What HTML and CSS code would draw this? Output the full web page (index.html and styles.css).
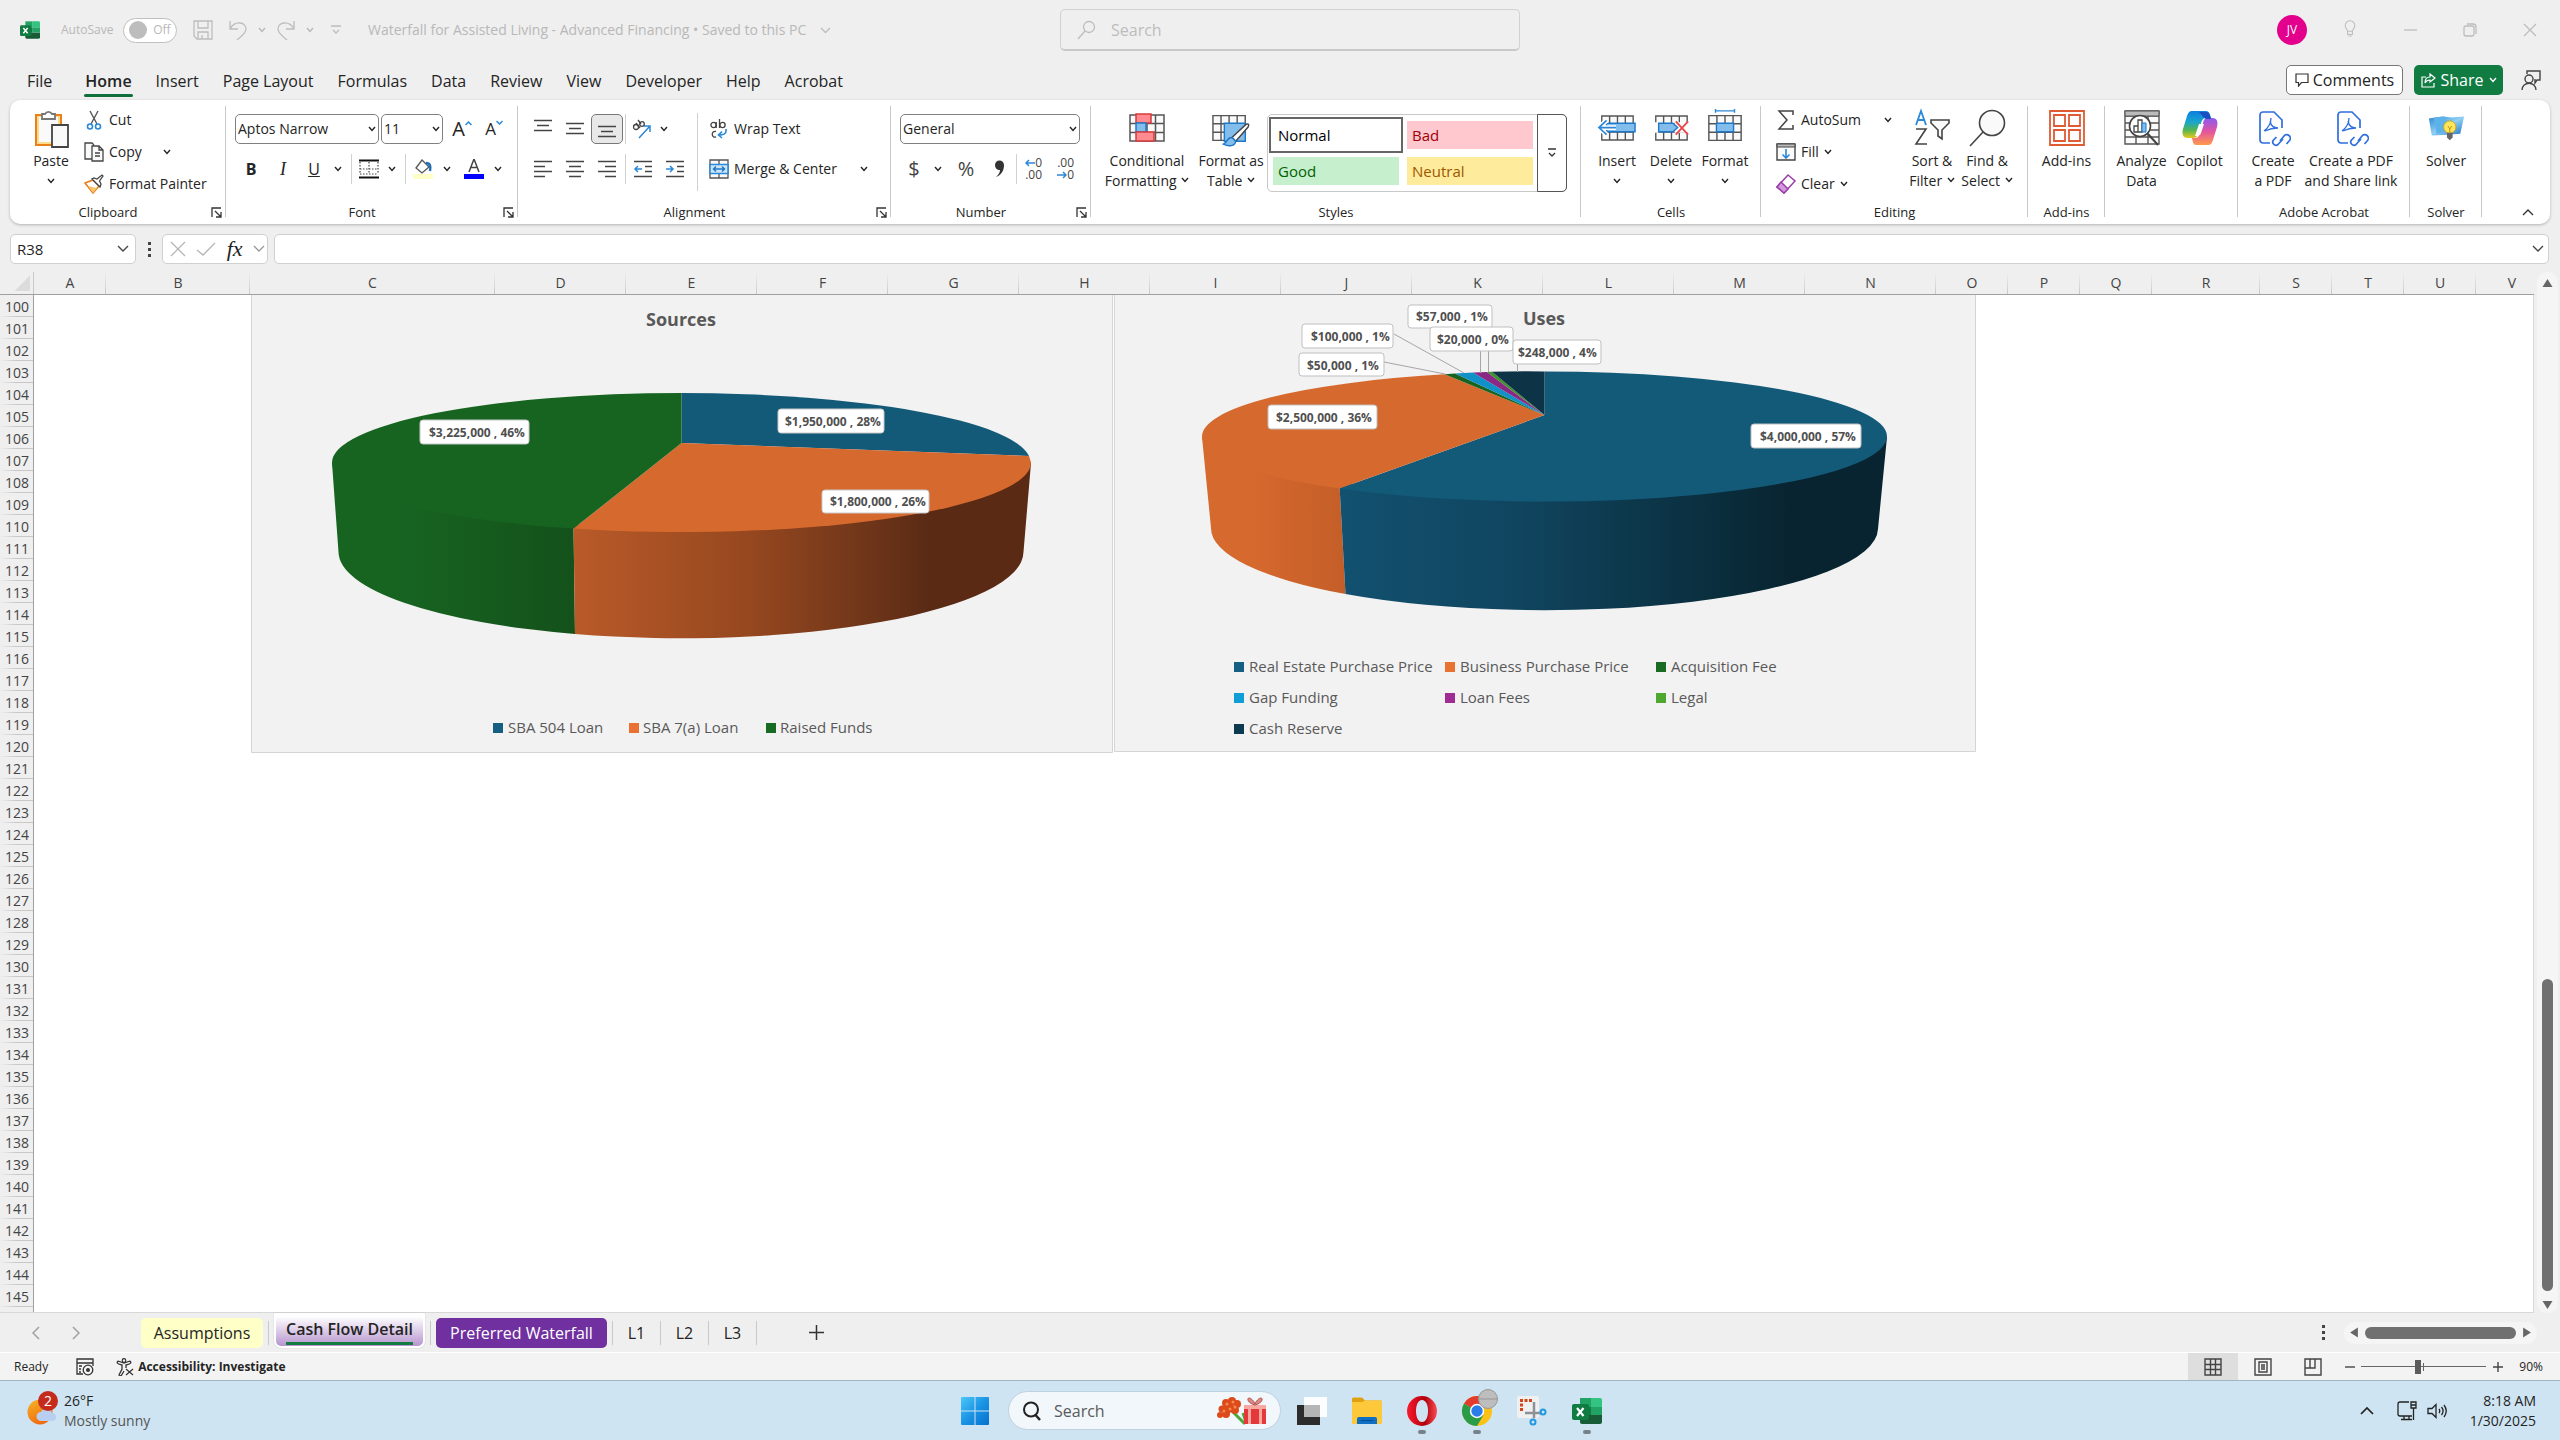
FILE: index.html
```html
<!DOCTYPE html>
<html lang="en">
<head>
<meta charset="utf-8">
<title>Waterfall for Assisted Living - Advanced Financing</title>
<link rel="stylesheet" href="styles.css">
</head>
<body>
<svg class="defs" aria-hidden="true">
  <symbol id="chev" viewBox="0 0 8 6"><path d="M1 1l3 3.5L7 1" fill="none" stroke="currentColor" stroke-width="1.4"/></symbol>
  <symbol id="launch" viewBox="0 0 11 11"><path d="M1 10V1h9M4 4l6 6M10 5v5H5" fill="none" stroke="#333" stroke-width="1.3"/></symbol>
  <symbol id="excel" viewBox="0 0 30 30"><path d="M8 2h11v9H8z" fill="#21a366"/><path d="M19 2h9a2 2 0 0 1 2 2v7H19z" fill="#33c481"/><path d="M8 11h11v8H8z" fill="#107c41"/><path d="M19 11h11v8H19z" fill="#21a366"/><path d="M8 19h22v7a2 2 0 0 1-2 2H10a2 2 0 0 1-2-2z" fill="#185c37"/><rect y="8" width="17" height="16" rx="2" fill="#107c41"/><path d="M5 12l6.500 8M11.500 12L5 20" stroke="#fff" stroke-width="2.200"/></symbol>
  <symbol id="grid" viewBox="0 0 36 28"><path d="M1 1h34v26H1zM1 9.500h34M1 18.500h34M9.500 1v26M18 1v26M26.500 1v26" fill="#fafafa" stroke="#555" stroke-width="1.500"/></symbol>
  <symbol id="pdf" viewBox="0 0 36 40"><path d="M15 35H8a3 3 0 0 1-3-3V7a3 3 0 0 1 3-3h11l8 8v8" fill="none" stroke="#2f6fde" stroke-width="1.700"/><path d="M9 23c4-3 7-7 7-13M15 13c1 5 4 7 8 7-5 0-9 1-13 3" fill="none" stroke="#2f6fde" stroke-width="1.300"/><path d="M25 32l4-5a3.500 3.500 0 0 1 5.500 4.500l-3 3.500M28 30l-5 5.500a3.200 3.200 0 0 1-4.500-4.500l3-3" transform="translate(0 1)" fill="none" stroke="#2f6fde" stroke-width="1.700"/></symbol>
</svg>

<header class="titlebar">
  <div class="quick">
    <svg class="i20 app" ><use href="#excel"/></svg>
    <span class="autosave">AutoSave</span>
    <button class="toggle" aria-label="AutoSave"><i></i>Off</button>
    <button class="qa save" aria-label="Save"><svg class="i20" viewBox="0 0 20 20"><path d="M1 1h18v18H4l-3-3zM5 1v7h10V1M5 19v-7h10v7M9 15v4" /></svg></button>
    <button class="qa" aria-label="Undo"><svg class="i20" viewBox="0 0 20 20"><path d="M2 1v8h8M2 9C7 0 18 2 18 9c0 3-2 5-9 11"/></svg></button>
    <button class="qa dd" aria-label="Undo list"><svg class="chev"><use href="#chev"/></svg></button>
    <button class="qa" aria-label="Redo"><svg class="i20" viewBox="0 0 20 20"><path d="M18 1v8h-8M18 9C13 0 2 2 2 9c0 3 2 5 9 11"/></svg></button>
    <button class="qa dd" aria-label="Redo list"><svg class="chev"><use href="#chev"/></svg></button>
    <button class="qa more" aria-label="Customize toolbar"><svg width="10" height="10" viewBox="0 0 10 10"><path d="M0 1h10M2 5l3 3 3-3"/></svg></button>
    <button class="doc">Waterfall for Assisted Living - Advanced Financing • Saved to this PC <svg width="11" height="7" viewBox="0 0 11 7"><path d="M1 1l4.500 4.500L10 1"/></svg></button>
  </div>
  <label class="search"><svg width="20" height="20" viewBox="0 0 20 20"><circle cx="12" cy="7" r="5.500"/><path d="M8 11l-7 8"/></svg><input type="text" placeholder="Search" aria-label="Search"></label>
  <div class="window">
    <button class="avatar">JV</button>
    <button aria-label="Ideas"><svg class="i20" viewBox="0 0 20 20"><path d="M7 14C6 11 4 10 4 7a6 6 0 0 1 12 0c0 3-2 4-3 7zM7 14v4h6v-4M8 20h4" transform="translate(2 0) scale(.8)"/></svg></button>
    <button aria-label="Minimize"><svg class="i20" viewBox="0 0 20 20"><path d="M4 10h13"/></svg></button>
    <button aria-label="Restore"><svg class="i20" viewBox="0 0 20 20"><rect x="4" y="6" width="10" height="10" rx="2"/><path d="M7 4h6a3 3 0 0 1 3 3v7"/></svg></button>
    <button aria-label="Close"><svg class="i20" viewBox="0 0 20 20"><path d="M4 4l12 12M16 4L4 16"/></svg></button>
  </div>
</header>

<nav class="tabs">
  <button class="file">File</button><button class="on">Home</button><button>Insert</button><button>Page Layout</button><button>Formulas</button><button>Data</button><button>Review</button><button>View</button><button>Developer</button><button>Help</button><button>Acrobat</button>
  <div class="actions">
    <button class="comments"><svg width="14" height="14" viewBox="0 0 14 14"><path d="M1 1h12v8.500H6.500L3.500 13V9.500H1z" fill="none" stroke="#333" stroke-width="1.200"/></svg>Comments</button>
    <button class="share"><svg width="15" height="15" viewBox="0 0 15 15"><path d="M5 4H1v10h12v-4M9 1l5 4-5 4V7C7 7 5 8 4 10c0-4 2-6 5-6z" fill="none" stroke="#fff" stroke-width="1.200"/></svg>Share<svg class="chev"><use href="#chev"/></svg></button>
    <button class="catchup" aria-label="Catch up"><svg class="i20" viewBox="0 0 20 20"><circle cx="8" cy="9" r="4"/><path d="M1 20c0-9 14-9 14 0M6 4V1h13v9h-3l-2 3v-4"/></svg></button>
  </div>
</nav>

<section class="ribbon">
  <div class="group g-clip">
    <div class="body">
      <button class="big paste"><svg viewBox="0 0 36 40"><path d="M3 7h25v30H3z" fill="#fbdc8e" stroke="#e8811a" stroke-width="2"/><path d="M6 9h19v25H6z" fill="#fafafa"/><path d="M9 6h3a4 4 0 0 1 7 0h3v5H9z" fill="#fff" stroke="#777" stroke-width="1.800"/><path d="M19 17h16v22H19z" fill="#fafafa" stroke="#444" stroke-width="1.800"/></svg><span>Paste</span><svg class="chev"><use href="#chev"/></svg></button>
      <div class="stack">
        <button><svg class="i20" viewBox="0 0 20 20"><path d="M6 1l7 13M14 1L7 14" stroke="#555" fill="none" stroke-width="1.400"/><circle cx="6" cy="16.500" r="2.500" fill="none" stroke="#2b88d8" stroke-width="1.600"/><circle cx="14" cy="16.500" r="2.500" fill="none" stroke="#2b88d8" stroke-width="1.600"/></svg>Cut</button>
        <button class="copy"><svg class="i20" viewBox="0 0 20 20"><path d="M8 17H1V1h7l2 2M8 4h7l4 4v11H8zM15 4v4h4M11 11h5M11 14h5" fill="#fafafa" stroke="#444" stroke-width="1.300"/></svg>Copy<svg class="chev"><use href="#chev"/></svg></button>
        <button><svg class="i20" viewBox="0 0 20 20"><path d="M9 6l6 6-6 7L1 9z" fill="#fff" stroke="#e8811a" stroke-width="1.600"/><path d="M4 12l9 2-4 5z" fill="#f9c36b"/><path d="M8 5l8 8 1-3-1.500-3L19 2l-1-1-5 4-3-1z" fill="#fff" stroke="#444" stroke-width="1.300"/></svg>Format Painter</button>
      </div>
    </div>
    <div class="name">Clipboard<button aria-label="Clipboard options"><svg><use href="#launch"/></svg></button></div>
  </div>

  <div class="group g-font">
    <div class="body rows">
      <div class="row">
        <label class="combo w144"><select aria-label="Font"><option>Aptos Narrow</option></select><svg class="chev"><use href="#chev"/></svg></label>
        <label class="combo w62"><select aria-label="Font size"><option>11</option></select><svg class="chev"><use href="#chev"/></svg></label>
        <button class="w32 grow">A<svg width="7" height="5" viewBox="0 0 7 5"><path d="M.5 4l3-3 3 3" fill="none" stroke="#2b88d8" stroke-width="1.500"/></svg></button>
        <button class="w32 shrink">A<svg width="7" height="5" viewBox="0 0 7 5"><path d="M.5 1l3 3 3-3" fill="none" stroke="#2b88d8" stroke-width="1.500"/></svg></button>
      </div>
      <div class="row">
        <button class="w32 b">B</button><button class="w32 i">I</button><button class="w30 u">U</button><button class="w18" aria-label="Underline style"><svg class="chev"><use href="#chev"/></svg></button><hr>
        <button class="w28" aria-label="Borders"><svg class="i20" viewBox="0 0 20 20"><path d="M0 1.500h20M0 18.500h20" stroke="#111" stroke-width="2"/><path d="M1 3v12M19 3v12M10 3v12M1 10h18M1 15h18" stroke="#444" stroke-width="1.200" stroke-dasharray="1.500 1.500"/></svg></button><button class="w18" aria-label="Border list"><svg class="chev"><use href="#chev"/></svg></button><hr>
        <button class="w28" aria-label="Fill color"><svg class="i20" viewBox="0 0 20 20"><path d="M9 1l7 7-7 6-6-5z" fill="#fff" stroke="#555" stroke-width="1.300"/><path d="M13 4c4 0 5 3 4 8" stroke="#1f6fb5" stroke-width="2.500" fill="none"/><path d="M0 15h20v5H0z" fill="#ffffc8"/></svg></button><button class="w20" aria-label="Fill list"><svg class="chev"><use href="#chev"/></svg></button>
        <button class="w34" aria-label="Font color"><svg class="i20" viewBox="0 0 20 20"><path d="M5 13L10 0l5 13M7 8.500h6" fill="none" stroke="#444" stroke-width="1.500"/><path d="M0 15h20v5H0z" fill="#00f"/></svg></button><button class="w14" aria-label="Color list"><svg class="chev"><use href="#chev"/></svg></button>
      </div>
    </div>
    <div class="name">Font<button aria-label="Font options"><svg><use href="#launch"/></svg></button></div>
  </div>

  <div class="group g-align">
    <div class="body">
      <div class="rows part">
        <div class="row">
          <button class="w32" aria-label="Top align"><svg class="i20 ln" viewBox="0 0 20 20"><path d="M1 1.500h18M4 6.500h12M1 11.500h18"/></svg></button><button class="w32" aria-label="Middle align"><svg class="i20 ln" viewBox="0 0 20 20"><path d="M1 4.500h18M4 9.500h12M1 14.500h18"/></svg></button><button class="w32 sel" aria-label="Bottom align"><svg class="i20 ln" viewBox="0 0 20 20"><path d="M1 7.500h18M4 12.500h12M1 17.500h18"/></svg></button><hr class="thin">
          <button class="w30" aria-label="Orientation"><svg class="i20" viewBox="0 0 20 20"><path d="M7 19L18 7M18 13V7h-6" fill="none" stroke="#2b88d8" stroke-width="1.500"/><circle cx="4" cy="8" r="2.500" fill="none" stroke="#444" stroke-width="1.300"/><path d="M4 4l4 5M6 1l3 4" stroke="#444" stroke-width="1.300"/><circle cx="10" cy="5" r="2.300" fill="none" stroke="#444" stroke-width="1.300"/></svg></button><button class="w14" aria-label="Orientation list"><svg class="chev"><use href="#chev"/></svg></button>
        </div>
        <div class="row">
          <button class="w32" aria-label="Align left"><svg class="i20 ln" viewBox="0 0 20 20"><path d="M1 2.500h18M1 7.500h11M1 12.500h18M1 17.500h11"/></svg></button><button class="w32" aria-label="Center"><svg class="i20 ln" viewBox="0 0 20 20"><path d="M1 2.500h18M4 7.500h12M1 12.500h18M4 17.500h12"/></svg></button><button class="w32" aria-label="Align right"><svg class="i20 ln" viewBox="0 0 20 20"><path d="M1 2.500h18M8 7.500h11M1 12.500h18M8 17.500h11"/></svg></button><hr class="thin">
          <button class="w32" aria-label="Decrease indent"><svg class="i20 ln" viewBox="0 0 20 20"><path d="M1 2.500h18M12 7.500h7M12 12.500h7M1 17.500h18"/><path d="M9 10H2M5 7l-3 3 3 3" class="bl"/></svg></button><button class="w32" aria-label="Increase indent"><svg class="i20 ln" viewBox="0 0 20 20"><path d="M1 2.500h18M12 7.500h7M12 12.500h7M1 17.500h18"/><path d="M1 10h7M5 7l3 3-3 3" class="bl"/></svg></button>
        </div>
      </div>
      <div class="rows wrap">
        <button class="row"><svg class="i20" viewBox="0 0 20 20"><g fill="none" stroke="#444" stroke-width="1.300"><circle cx="4.500" cy="6" r="2.600"/><path d="M7.200 3v6M10.500 0v9M7 12.500c-5-1-5 6.500 0 5.500"/><circle cx="13.500" cy="6" r="2.600"/></g><path d="M17 10v2q0 4-7 4M13 12.500L9.500 16l3.500 3" fill="none" stroke="#2b88d8" stroke-width="1.600"/></svg>Wrap Text</button>
        <button class="row"><svg class="i20" viewBox="0 0 20 20"><path d="M1 1h18v18H1zM10 1v5M10 14v5" fill="#fafafa" stroke="#555" stroke-width="1.300"/><path d="M1 5.500h18v9H1z" fill="#cfe6fa" stroke="#2b88d8" stroke-width="1.500"/><path d="M4 10h12M7 7.500L4.500 10 7 12.500M13 7.500l2.500 2.500-2.500 2.500" fill="none" stroke="#1f78c8" stroke-width="1.500"/></svg>Merge &amp; Center<svg class="chev far"><use href="#chev"/></svg></button>
      </div>
    </div>
    <div class="name">Alignment<button aria-label="Alignment options"><svg><use href="#launch"/></svg></button></div>
  </div>

  <div class="group g-num">
    <div class="body rows">
      <div class="row"><label class="combo w180"><select aria-label="Number format"><option>General</option></select><svg class="chev"><use href="#chev"/></svg></label></div>
      <div class="row">
        <button class="w28 sym">$</button><button class="w20" aria-label="Currency list"><svg class="chev"><use href="#chev"/></svg></button><button class="w36 sym">%</button><button class="w30" aria-label="Comma style"><svg class="i20" viewBox="0 0 20 20"><path d="M6 6a4.500 4.500 0 0 1 9 0c0 6-3 10-8 12 3-3 4-5 4-7-3 0-5-2-5-5z" fill="#333"/></svg></button><hr class="thin">
        <button class="w30 dec" aria-label="Increase decimal"><span><svg width="10" height="8" viewBox="0 0 10 8"><path d="M10 4H1M4 1L1 4l3 3" class="bl"/></svg>0</span><span>.00</span></button>
        <button class="w32 dec" aria-label="Decrease decimal"><span>.00</span><span><svg width="10" height="8" viewBox="0 0 10 8"><path d="M0 4h9M6 1l3 3-3 3" class="bl"/></svg>0</span></button>
      </div>
    </div>
    <div class="name">Number<button aria-label="Number options"><svg><use href="#launch"/></svg></button></div>
  </div>

  <div class="group g-styles">
    <div class="body">
      <button class="big w86"><svg viewBox="0 0 36 40"><use href="#grid" y="6" width="36" height="28"/><path d="M7 6h15v9H7z" fill="#ff8a8f" stroke="#d83b3b" stroke-width="1.500"/><path d="M7 15h10v9H7z" fill="#83bdec" stroke="#1f78c8" stroke-width="1.500"/><path d="M7 24h18v9H7z" fill="#ff8a8f" stroke="#d83b3b" stroke-width="1.500"/></svg><span>Conditional<br>Formatting <svg class="chev"><use href="#chev"/></svg></span></button>
      <button class="big w82"><svg viewBox="0 0 40 40"><use href="#grid" y="6" width="36" height="28"/><path d="M13 15h22v19H13z" fill="#83bdec" stroke="#1f78c8" stroke-width="1.500"/><path d="M36 16c3-1 3 1 2 3L25 34l-4-4z" fill="#fff" stroke="#444" stroke-width="1.500"/><path d="M21 30c-6 0-4 5-9 7 6 3 12 2 13-3z" fill="#83bdec" stroke="#1f78c8" stroke-width="1.500"/></svg><span>Format as<br>Table <svg class="chev"><use href="#chev"/></svg></span></button>
      <div class="gallery">
        <div class="swatches"><button class="normal">Normal</button><button class="bad">Bad</button><button class="good">Good</button><button class="neutral">Neutral</button></div>
        <button class="open" aria-label="More styles"><svg width="10" height="10" viewBox="0 0 10 10"><path d="M1 1h8M2 5l3 3 3-3" fill="none" stroke="#333" stroke-width="1.300"/></svg></button>
      </div>
    </div>
    <div class="name">Styles</div>
  </div>

  <div class="group g-cells">
    <div class="body">
      <button class="big w54"><svg viewBox="0 0 40 40"><use href="#grid" x="3" y="6" width="35" height="28"/><path d="M9 15h30v9H9z" fill="#83bdec" stroke="#1f78c8" stroke-width="1.500"/><path d="M1 19.500h18M9 12l-8 7.500L9 27" fill="none" stroke="#fff" stroke-width="5"/><path d="M1 19.500h18M9 12l-8 7.500L9 27" fill="none" stroke="#2b88d8" stroke-width="1.800"/></svg><span>Insert</span><svg class="chev"><use href="#chev"/></svg></button>
      <button class="big w54"><svg viewBox="0 0 40 40"><use href="#grid" x="3" y="6" width="35" height="28"/><path d="M0 14h7v11H0zM24 14h14v11H24z" fill="#fff"/><path d="M7 15h15l5 4.500-5 4.500H7z" fill="#83bdec" stroke="#1f78c8" stroke-width="1.500"/><path d="M25 13l13 14M38 13L25 27" stroke="#e8484c" stroke-width="2"/></svg><span>Delete</span><svg class="chev"><use href="#chev"/></svg></button>
      <button class="big w54"><svg viewBox="0 0 40 40"><use href="#grid" x="2" y="6" width="36" height="28"/><path d="M11 15h18v9H11z" fill="#83bdec" stroke="#1f78c8" stroke-width="1.500"/><path d="M10 2h20M10 0v4M30 0v4" stroke="#2b88d8" stroke-width="1.500"/></svg><span>Format</span><svg class="chev"><use href="#chev"/></svg></button>
    </div>
    <div class="name">Cells</div>
  </div>

  <div class="group g-edit">
    <div class="body">
      <div class="stack">
        <button class="sum"><svg class="i20" viewBox="0 0 20 20"><path d="M17 5V1H3l8 9-8 9h14v-4" fill="none" stroke="#444" stroke-width="1.500"/></svg>AutoSum<svg class="chev"><use href="#chev"/></svg></button>
        <button><svg class="i20" viewBox="0 0 20 20"><path d="M1 2h18v16H1z" fill="#fafafa" stroke="#444" stroke-width="1.400"/><path d="M1 2h18v3H1z" fill="#bbb" stroke="#444"/><path d="M10 7v9M6.500 12.500L10 16l3.500-3.500" fill="none" stroke="#2b88d8" stroke-width="1.600"/></svg>Fill <svg class="chev"><use href="#chev"/></svg></button>
        <button><svg class="i20" viewBox="0 0 20 20"><path d="M12 1l7 6-11 12-7-6z" fill="#fff" stroke="#9b3fa8" stroke-width="1.500"/><path d="M5 8l7 7-4 4-7-6z" fill="#d39ae0" stroke="#9b3fa8" stroke-width="1.500"/></svg>Clear <svg class="chev"><use href="#chev"/></svg></button>
      </div>
      <button class="big w56"><svg viewBox="0 0 36 40"><path d="M2 17L7 3l5 14M4 12h6" fill="none" stroke="#2b88d8" stroke-width="1.800"/><path d="M2 21h10L2 36h11" fill="none" stroke="#444" stroke-width="1.600"/><path d="M17 12h18v3l-7 7v9l-4-3v-6l-7-7z" fill="#fafafa" stroke="#444" stroke-width="1.600"/></svg><span>Sort &amp;<br>Filter <svg class="chev"><use href="#chev"/></svg></span></button>
      <button class="big w54"><svg viewBox="0 0 36 40"><circle cx="23" cy="15" r="12.500" fill="#fafafa" stroke="#444" stroke-width="1.600"/><path d="M14 24L1 38" stroke="#444" stroke-width="1.600"/></svg><span>Find &amp;<br>Select <svg class="chev"><use href="#chev"/></svg></span></button>
    </div>
    <div class="name">Editing</div>
  </div>

  <div class="group g-add">
    <div class="body center"><button class="big"><svg viewBox="0 0 36 40"><path d="M1 3h34v34H1zM5 7h11v11H5zM20 7h11v11H20zM5 22h11v11H5zM20 22h11v11H20z" fill="none" stroke="#e05a33" stroke-width="1.800"/></svg><span>Add-ins</span></button></div>
    <div class="name">Add-ins</div>
  </div>

  <div class="group g-analyze">
    <div class="body center">
      <button class="big w56"><svg viewBox="0 0 36 40"><path d="M1 3h34v33H1zM1 8h34M1 15h34M1 22h34M1 29h34M12 8v28M24 8v28" fill="#fafafa" stroke="#555" stroke-width="1.400"/><path d="M1 3h34v5H1z" fill="#bbb" stroke="#555"/><circle cx="16" cy="18" r="10.500" fill="#fff" stroke="#444" stroke-width="1.600"/><path d="M24 26l10 11" stroke="#444" stroke-width="2"/><path d="M10 18h4v6h-4zM14 12h4v12h-4z" fill="#fff" stroke="#444" stroke-width="1.300"/><path d="M18 15h4v9h-4z" fill="#83bdec" stroke="#1f78c8"/></svg><span>Analyze<br>Data</span></button>
      <button class="big w60"><svg viewBox="0 0 36 40"><defs><linearGradient id="ca" x1="0" y1="0" x2="0" y2="1"><stop offset="0" stop-color="#0c7fe0"/><stop offset=".4" stop-color="#19a6cf"/><stop offset=".7" stop-color="#52b653"/><stop offset="1" stop-color="#e9c81a"/></linearGradient><linearGradient id="cb" x1="0" y1="0" x2="0" y2="1"><stop offset="0" stop-color="#8a5cf0"/><stop offset=".5" stop-color="#e2559f"/><stop offset="1" stop-color="#ff9a4a"/></linearGradient></defs><path d="M10 3h14c3 0 4 3 5 7h-5c-3 0-4 2-5 5l-3 11c-1 3-2 4-5 4H6c-6 0-6-5-5-9L5 8c1-3 2-5 5-5z" fill="url(#ca)"/><path d="M26 37H14c-3 0-3-3-4-7h3c3 0 4-2 5-5l3-10c1-4 2-5 5-5h4c6 0 6 5 5 9l-4 13c-1 3-2 5-5 5z" fill="url(#cb)"/><path d="M17 4h8c2 0 3 3 4 7h-4c-3 0-4-3-8-7z" fill="#1a4fc4"/><path d="M17 16h5l-3 9c0 0-1 3-4 3h-2z" fill="#fff"/></svg><span>Copilot</span></button>
    </div>
    <div class="name"></div>
  </div>

  <div class="group g-acro">
    <div class="body center">
      <button class="big w54"><svg viewBox="0 0 36 40"><use href="#pdf"/></svg><span>Create<br>a PDF</span></button>
      <button class="big w102"><svg viewBox="0 0 36 40"><use href="#pdf"/></svg><span>Create a PDF<br>and Share link</span></button>
    </div>
    <div class="name">Adobe Acrobat</div>
  </div>

  <div class="group g-solver">
    <div class="body center"><button class="big"><svg viewBox="0 0 40 40"><defs><linearGradient id="so" x1="0" y1="0" x2="1" y2="1"><stop offset="0" stop-color="#2c86d0"/><stop offset=".5" stop-color="#8fd0f5"/><stop offset="1" stop-color="#1d6fc0"/></linearGradient></defs><path d="M2 10l14-2 10 1 13-1-4 18-14 1-16 1z" fill="url(#so)"/><path d="M7 9l12-1 4 15-13 3z" fill="#5db2ea"/><circle cx="24" cy="19" r="6.500" fill="#ffe65a" stroke="#c9a520"/><path d="M21 25h6v5l-3 3-3-3z" fill="#666"/><path d="M22 18l2 3 2-3M24 21v4" fill="none" stroke="#b98a10"/></svg><span>Solver</span></button></div>
    <div class="name">Solver</div>
  </div>
  <button class="collapse" aria-label="Collapse ribbon"><svg width="12" height="8" viewBox="0 0 12 8"><path d="M1 7l5-5 5 5" fill="none" stroke="#333" stroke-width="1.400"/></svg></button>
</section>

<section class="formula">
  <label class="namebox"><input type="text" value="R38" aria-label="Name box"><svg width="12" height="8" viewBox="0 0 12 8"><path d="M1 1l5 5 5-5" fill="none" stroke="#444" stroke-width="1.400"/></svg></label>
  <span class="dots"><i></i><i></i><i></i></span>
  <div class="fx">
    <button aria-label="Cancel"><svg width="16" height="16" viewBox="0 0 16 16"><path d="M1 1l14 14M15 1L1 15" fill="none" stroke="#b5b5b5" stroke-width="1.300"/></svg></button>
    <button aria-label="Enter"><svg width="20" height="14" viewBox="0 0 20 14"><path d="M1 8l6 5L19 1" fill="none" stroke="#b5b5b5" stroke-width="1.300"/></svg></button>
    <button class="fn">fx</button>
    <button aria-label="Function list"><svg width="12" height="8" viewBox="0 0 12 8"><path d="M1 1l5 5 5-5" fill="none" stroke="#999" stroke-width="1.300"/></svg></button>
  </div>
  <label class="entry"><input type="text" aria-label="Formula bar"><svg width="12" height="8" viewBox="0 0 12 8"><path d="M1 1l5 5 5-5" fill="none" stroke="#444" stroke-width="1.400"/></svg></label>
</section>

<main class="sheet">
  <div class="cols"><span class="all"></span><span>A</span><span>B</span><span>C</span><span>D</span><span>E</span><span>F</span><span>G</span><span>H</span><span>I</span><span>J</span><span>K</span><span>L</span><span>M</span><span>N</span><span>O</span><span>P</span><span>Q</span><span>R</span><span>S</span><span>T</span><span>U</span><span>V</span></div>
  <div class="grid">
    <ul class="rownums">
      <li>100</li><li>101</li><li>102</li><li>103</li><li>104</li><li>105</li><li>106</li><li>107</li><li>108</li><li>109</li><li>110</li><li>111</li><li>112</li><li>113</li><li>114</li><li>115</li><li>116</li><li>117</li><li>118</li><li>119</li><li>120</li><li>121</li><li>122</li><li>123</li><li>124</li><li>125</li><li>126</li><li>127</li><li>128</li><li>129</li><li>130</li><li>131</li><li>132</li><li>133</li><li>134</li><li>135</li><li>136</li><li>137</li><li>138</li><li>139</li><li>140</li><li>141</li><li>142</li><li>143</li><li>144</li><li>145</li>
    </ul>
    <div class="cells">
      <svg class="chart" width="862" height="459" viewBox="251 294 862 459" role="img" aria-label="Sources pie chart">
        <defs>
          <linearGradient id="s1" gradientUnits="userSpaceOnUse" x1="400" x2="575" y1="0" y2="0"><stop offset="0" stop-color="#176421"/><stop offset="1" stop-color="#14511b"/></linearGradient>
          <linearGradient id="s2" gradientUnits="userSpaceOnUse" x1="575" x2="930" y1="0" y2="0"><stop offset="0" stop-color="#b95a29"/><stop offset=".5" stop-color="#95471f"/><stop offset=".85" stop-color="#6c3419"/><stop offset="1" stop-color="#5a2a15"/></linearGradient>
        </defs>
        <path class="frame" d="M251.500 294.500h861v458h-861z"/>
        <path d="M332 463L338.500 552A342.500 86.500 0 0 0 575 634L573.500 525z" fill="url(#s1)"/>
        <path d="M573.500 525L575 634A342.500 86.500 0 0 0 1023.500 552L1031 463z" fill="url(#s2)"/>
        <path d="M681.500 443V393A349.500 69.500 0 0 1 1029 456z" fill="#135a79"/>
        <path d="M681.500 443L1029 456L1031 462.500A349.500 69.500 0 0 1 573.500 528.600z" fill="#d6692e"/>
        <path d="M681.500 443L573.500 528.600A349.500 69.500 0 0 1 332 462.500A349.500 69.500 0 0 1 681.500 393z" fill="#176421"/>
        <g class="tags">
          <rect x="420" y="420" width="109" height="24" rx="3"/><text x="429" y="437">$3,225,000 , 46%</text>
          <rect x="778" y="409" width="106" height="24" rx="3"/><text x="785" y="426">$1,950,000 , 28%</text>
          <rect x="822" y="490" width="107" height="23" rx="3"/><text x="830" y="506">$1,800,000 , 26%</text>
        </g>
        <text class="title" x="681" y="326">Sources</text>
        <g class="legend">
          <path d="M493 723h10v10h-10z" fill="#156082"/><text x="508" y="733">SBA 504 Loan</text>
          <path d="M629 723h10v10h-10z" fill="#e97132"/><text x="643" y="733">SBA 7(a) Loan</text>
          <path d="M766 723h10v10h-10z" fill="#196b24"/><text x="780" y="733">Raised Funds</text>
        </g>
      </svg>
      <svg class="chart" width="862" height="458" viewBox="1114 294 862 458" role="img" aria-label="Uses pie chart">
        <defs>
          <linearGradient id="u1" gradientUnits="userSpaceOnUse" x1="1250" x2="1345" y1="0" y2="0"><stop offset="0" stop-color="#d6692e"/><stop offset="1" stop-color="#c45e28"/></linearGradient>
          <linearGradient id="u2" gradientUnits="userSpaceOnUse" x1="1340" x2="1790" y1="0" y2="0"><stop offset="0" stop-color="#125170"/><stop offset=".4" stop-color="#10455f"/><stop offset=".85" stop-color="#0a2d3c"/><stop offset="1" stop-color="#082430"/></linearGradient>
        </defs>
        <path class="frame" d="M1114.500 294.500h861v457h-861z"/>
        <path d="M1202 437L1211 528A333.500 82 0 0 0 1345.500 594L1339.500 485z" fill="url(#u1)"/>
        <path d="M1339.500 485L1345.500 594A333.500 82 0 0 0 1878 529L1887 437z" fill="url(#u2)"/>
        <path d="M1544.500 415V371.500A342.500 65 0 0 1 1887 436.500A342.500 65 0 0 1 1339.500 488.600z" fill="#135a79"/>
        <path d="M1544.500 415L1339.500 488.600A342.500 65 0 0 1 1202 436.500A342.500 65 0 0 1 1444.500 374.300z" fill="#d6692e"/>
        <path d="M1544.500 415L1444.500 374.300L1455 373.500z" fill="#176421"/>
        <path d="M1544.500 415L1455 373.500L1473 372.500z" fill="#1092c8"/>
        <path d="M1544.500 415L1473 372.500L1487 372z" fill="#8b2785"/>
        <path d="M1544.500 415L1487 372L1492 371.800z" fill="#3f9230"/>
        <path d="M1544.500 415L1492 371.800Q1520 371 1544.500 371.500z" fill="#0d3446"/>
        <path class="leads" d="M1394 334L1464 373M1384 362L1445 374M1480.500 350V373M1488.500 350V372M1517.500 364V372"/>
        <text class="title" x="1544" y="325">Uses</text>
        <g class="tags lined">
          <rect x="1408" y="305" width="84" height="23" rx="3"/><text x="1416" y="321">$57,000 , 1%</text>
          <rect x="1430" y="327" width="83" height="24" rx="3"/><text x="1437" y="344">$20,000 , 0%</text>
          <rect x="1513" y="340" width="88" height="24" rx="3"/><text x="1518" y="357">$248,000 , 4%</text>
          <rect x="1302" y="324" width="91" height="24" rx="3"/><text x="1311" y="341">$100,000 , 1%</text>
          <rect x="1299" y="353" width="85" height="23" rx="3"/><text x="1307" y="370">$50,000 , 1%</text>
          <rect x="1268" y="405" width="109" height="24" rx="3"/><text x="1276" y="422">$2,500,000 , 36%</text>
          <rect x="1751" y="424" width="110" height="24" rx="3"/><text x="1760" y="441">$4,000,000 , 57%</text>
        </g>
        <g class="legend">
          <path d="M1234 662h10v10h-10z" fill="#156082"/><text x="1249" y="672">Real Estate Purchase Price</text>
          <path d="M1445 662h10v10h-10z" fill="#e97132"/><text x="1460" y="672">Business Purchase Price</text>
          <path d="M1656 662h10v10h-10z" fill="#196b24"/><text x="1671" y="672">Acquisition Fee</text>
          <path d="M1234 693h10v10h-10z" fill="#0f9ed5"/><text x="1249" y="703">Gap Funding</text>
          <path d="M1445 693h10v10h-10z" fill="#a02b93"/><text x="1460" y="703">Loan Fees</text>
          <path d="M1656 693h10v10h-10z" fill="#4ea72e"/><text x="1671" y="703">Legal</text>
          <path d="M1234 724h10v10h-10z" fill="#0c3a50"/><text x="1249" y="734">Cash Reserve</text>
        </g>
      </svg>
    </div>
  </div>
  <div class="vscroll"><svg width="13" height="10" viewBox="0 0 11 9"><path d="M5.500 1L10 8H1z"/></svg><i></i><svg width="13" height="10" viewBox="0 0 11 9"><path d="M5.500 8L10 1H1z"/></svg></div>
</main>

<nav class="sheets">
  <button class="nav" aria-label="Previous sheet"><svg width="8" height="14" viewBox="0 0 8 14"><path d="M7 1L1 7l6 6"/></svg></button>
  <button class="nav" aria-label="Next sheet"><svg width="8" height="14" viewBox="0 0 8 14"><path d="M1 1l6 6-6 6"/></svg></button>
  <button class="tab yellow">Assumptions</button><hr>
  <button class="tab active"><span>Cash Flow Detail</span></button><hr>
  <button class="tab purple">Preferred Waterfall</button><hr>
  <button class="short">L1</button><hr><button class="short">L2</button><hr><button class="short">L3</button><hr>
  <button class="plus" aria-label="New sheet"><svg width="15" height="15" viewBox="0 0 15 15"><path d="M7.500 0v15M0 7.500h15" stroke="#333" stroke-width="1.500"/></svg></button>
  <span class="dots right"><i></i><i></i><i></i></span>
  <div class="hscroll"><svg width="10" height="13" viewBox="0 0 9 11"><path d="M1 5.500L8 1v9z"/></svg><i></i><svg width="10" height="13" viewBox="0 0 9 11"><path d="M8 5.500L1 1v9z"/></svg></div>
</nav>

<footer class="status">
  <span>Ready</span>
  <button class="rec" aria-label="Record macro"><svg width="18" height="18" viewBox="0 0 18 18"><path d="M1 1h16v4H1zM1 5v11h6M3 8h3M3 11h2M3 14h2M17 5v3" fill="none" stroke="#333" stroke-width="1.300"/><circle cx="12" cy="12" r="4.800" fill="none" stroke="#333" stroke-width="1.300"/><circle cx="12" cy="12" r="2" fill="#333"/></svg></button>
  <button class="acc"><svg width="18" height="18" viewBox="0 0 18 18"><path d="M2 3c-2 2 0 3 4 4v4l-3 6 2 1 3-5M14 3c2 2 0 3-4 4v3M2 3l6 2 6-2" fill="none" stroke="#333" stroke-width="1.300"/><circle cx="8" cy="2.500" r="1.800" fill="none" stroke="#333" stroke-width="1.200"/><path d="M10 11l7 6M17 11l-7 6" stroke="#333" stroke-width="1.200"/></svg>Accessibility: Investigate</button>
  <div class="views">
    <button class="on" aria-label="Normal view"><svg width="18" height="18" viewBox="0 0 18 18"><path d="M1 1h16v16H1zM1 6.500h16M1 11.500h16M6.500 1v16M11.500 1v16"/></svg></button>
    <button aria-label="Page layout view"><svg width="18" height="18" viewBox="0 0 18 18"><path d="M1 1h16v16H1zM5 4h8v10H5zM7 7h4M7 9h4M7 11h4"/></svg></button>
    <button aria-label="Page break view"><svg width="18" height="18" viewBox="0 0 18 18"><path d="M1 1h16v16H1zM1 10h10V1M6 1v9"/></svg></button>
    <button class="z" aria-label="Zoom out"><svg width="10" height="10" viewBox="0 0 10 10"><path d="M0 5h10"/></svg></button>
    <span class="slide"><input type="range" min="0" max="100" value="45" aria-label="Zoom"></span>
    <button class="z" aria-label="Zoom in"><svg width="10" height="10" viewBox="0 0 10 10"><path d="M0 5h10M5 0v10"/></svg></button>
    <button class="pct">90%</button>
  </div>
</footer>

<footer class="taskbar">
  <button class="weather">
    <svg width="34" height="40" viewBox="0 0 34 40"><defs><linearGradient id="sun" x1="0" y1="0" x2=".5" y2="1"><stop offset="0" stop-color="#f6b526"/><stop offset="1" stop-color="#ef6a10"/></linearGradient></defs><circle cx="13" cy="21" r="12.500" fill="url(#sun)"/><path d="M14 30a4.500 4.500 0 0 1 0-9 6 6 0 0 1 11 1 4 4 0 0 1 0 8z" fill="#b9cff2"/><circle cx="21" cy="10" r="10" fill="#c42b1c"/><text x="21" y="15">2</text></svg>
    <span>26°F<br><em>Mostly sunny</em></span>
  </button>
  <div class="apps">
    <button class="start" aria-label="Start"><svg width="30" height="30" viewBox="0 0 30 30"><defs><linearGradient id="win" x1="0" y1="0" x2="1" y2="1"><stop offset="0" stop-color="#4cc8fa"/><stop offset=".5" stop-color="#1a94e4"/><stop offset="1" stop-color="#0470cf"/></linearGradient></defs><path d="M1 2a1 1 0 0 1 1-1h12.500v13.500H1zM15.500 1H28a1 1 0 0 1 1 1v12.500H15.500zM1 15.500h13.500V29H2a1 1 0 0 1-1-1zM15.500 15.500H29V28a1 1 0 0 1-1 1H15.500z" fill="url(#win)"/></svg></button>
    <label class="tsearch"><svg width="20" height="20" viewBox="0 0 20 20"><circle cx="9" cy="8.500" r="7" fill="none" stroke="#222" stroke-width="2"/><path d="M13.500 14l4.500 5" stroke="#222" stroke-width="2.500"/></svg><input type="text" placeholder="Search" aria-label="Taskbar search">
      <svg width="50" height="28" viewBox="0 0 50 28"><path d="M14 13l13 13 2-1-3-9" fill="none" stroke="#4ea53a" stroke-width="3"/><g fill="#dd4b1a"><circle cx="9" cy="6" r="4"/><circle cx="15" cy="4" r="4"/><circle cx="20" cy="7" r="4"/><circle cx="5" cy="12" r="3.500"/><circle cx="12" cy="11" r="5"/><circle cx="18" cy="13" r="4"/><circle cx="3" cy="18" r="3"/><circle cx="9" cy="17" r="4"/></g><g fill="#f58a4a"><circle cx="10" cy="7" r="1.500"/><circle cx="16" cy="5" r="1.500"/><circle cx="13" cy="12" r="1.500"/><circle cx="7" cy="14" r="1.500"/><circle cx="18" cy="10" r="1.500"/></g><path d="M27 8h22v19H27z" fill="#e5383b"/><path d="M27 8h22v4H27z" fill="#f7a8a0"/><path d="M31 8h3v19h-3zM42 8h3v19h-3z" fill="#f7a8a0"/><path d="M38 8c-8-2-8-7-6-7s5 3 6 6c1-3 4-6 6-6s2 5-6 7z" fill="#d98a84" stroke="#b5524e"/></svg></label>
    <button class="task" aria-label="Task view"><svg width="30" height="30" viewBox="0 0 30 30"><path d="M0 9h23v20H0z" fill="#2c2c2c"/><path d="M7 1h23v20H7z" fill="#fff" fill-opacity=".9"/><path d="M7 9h16v12H7z" fill="#b5b5b5"/></svg></button>
    <button class="task" aria-label="File Explorer"><svg width="30" height="30" viewBox="0 0 30 30"><path d="M0 3a1.500 1.500 0 0 1 1.500-1.500H10l3 3H29v5H0z" fill="#e0a010"/><path d="M0 6h10l3-1.500h17V27a1 1 0 0 1-1 1H1a1 1 0 0 1-1-1z" fill="#fdc93a"/><path d="M5 28v-5a2 2 0 0 1 2-2h16a2 2 0 0 1 2 2v5z" fill="#0f6fc4"/><path d="M9 24.500h12" stroke="#0a4a8a"/></svg></button>
    <button class="task run" aria-label="Opera"><svg width="30" height="30" viewBox="0 0 30 30"><defs><linearGradient id="op" x1="0" y1="0" x2="1" y2="0"><stop offset="0" stop-color="#fa1b2d"/><stop offset=".6" stop-color="#b0000c"/><stop offset="1" stop-color="#fb4d55"/></linearGradient></defs><path d="M15 0a15 15 0 1 0 0 30 15 15 0 0 0 0-30zM15 4c4 0 6 5 6 11s-2 11-6 11-6-5-6-11 2-11 6-11z" fill="url(#op)"/></svg></button>
    <button class="task run" aria-label="Chrome"><svg width="42" height="44" viewBox="-6 0 42 44"><circle cx="15" cy="22" r="15" fill="#fbc116"/><path d="M15 22L2 14.500A15 15 0 0 1 28 14.500z" fill="#e33b2e"/><path d="M15 22L2 14.500A15 15 0 0 0 15 37l6.500-11z" fill="#2a9c48"/><circle cx="15" cy="22" r="7.200" fill="#fff"/><circle cx="15" cy="22" r="5.700" fill="#2b7de9"/><circle cx="26" cy="10" r="9.500" fill="#bdbdbd" stroke="#979797"/><path d="M17 10h18" stroke="#979797"/></svg></button>
    <button class="task" aria-label="Snipping Tool"><svg width="30" height="30" viewBox="0 0 30 30"><rect width="22" height="22" rx="2" fill="#f0f0f0"/><path d="M4.500 15V4.500H16" fill="none" stroke="#d3461a" stroke-width="3" stroke-dasharray="3 1.500"/><path d="M17 6v16M8 17h17" stroke="#8c9196" stroke-width="2.500"/><circle cx="16" cy="26" r="2.500" fill="none" stroke="#1f9ae0" stroke-width="2"/><circle cx="26" cy="16" r="2.500" fill="none" stroke="#1f9ae0" stroke-width="2"/></svg></button>
    <button class="task run" aria-label="Excel"><svg width="30" height="30"><use href="#excel"/></svg></button>
  </div>
  <div class="tray">
    <button aria-label="Hidden icons"><svg width="14" height="9" viewBox="0 0 14 9"><path d="M1 8l6-6 6 6" fill="none" stroke="#222" stroke-width="1.700"/></svg></button>
    <button aria-label="Network and volume"><svg width="20" height="22" viewBox="0 0 20 20"><path d="M12 1H3a2 2 0 0 0-2 2v10a2 2 0 0 0 2 2h12M7 15v3M12 15v3M4 18.500h11M14 1h5v6h-5zM14 4h5M16.500 7v12" fill="none" stroke="#222" stroke-width="1.300"/></svg><svg width="20" height="20" viewBox="0 0 20 20"><path d="M1 7.500h4l4-4v13l-4-4H1zM12 8c1 1.300 1 2.700 0 4M14.500 6c2 2.500 2 5.500 0 8M17 4c3 4 3 8 0 12" fill="none" stroke="#222" stroke-width="1.300"/></svg></button>
    <button class="clock">8:18 AM<br>1/30/2025</button>
  </div>
</footer>
</body>
</html>
```
FILE: styles.css
```css
* { box-sizing: border-box; }
body { margin: 0; height: 100vh; display: flex; flex-direction: column; overflow: hidden; background: #efefef; color: #242424; font: 14px/20px "Open Sans", sans-serif; }
button, input, select { font: inherit; color: inherit; background: none; border: 0; padding: 0; margin: 0; }
button { display: flex; align-items: center; justify-content: center; white-space: nowrap; }
input { outline: 0; min-width: 0; }
hr { margin: 0; border: 0; width: 8px; }
.defs { display: none; }
.i20 { width: 20px; height: 20px; flex: none; }
.chev { width: 8px; height: 6px; flex: none; }

/* title bar */
.titlebar { flex: none; height: 60px; display: grid; grid-template-columns: 1060fr 460px 1040fr; align-items: center; color: #b8b8b8; }
.titlebar svg path, .titlebar svg circle, .titlebar svg rect { stroke: #bdbdbd; fill: none; stroke-width: 1.3; }
.quick { display: flex; align-items: center; padding-left: 20px; font-size: 12px; }
.autosave { margin-left: 21px; width: 62px; }
.toggle { width: 54px; height: 25px; border: 1px solid #c0c0c0; border-radius: 13px; background: #fff; gap: 6px; margin-right: 16px; }
.toggle i { width: 18px; height: 18px; border-radius: 50%; background: #bdbdbd; }
.qa.save { margin-right: 15px; }
.qa.dd { width: 28px; }
.qa.more { width: 24px; margin-right: 20px; }
.doc { font-size: 14px; gap: 14px; }
.search { height: 42px; display: flex; align-items: center; gap: 14px; padding-left: 16px; border: 1px solid #d2d2d2; border-bottom: 2px solid #c8c8c8; border-radius: 5px; font-size: 16px; }
.search input::placeholder { color: #bdbdbd; opacity: 1; }
.window { display: flex; justify-content: flex-end; }
.window button { width: 60px; }
.window .avatar { width: 30px; height: 30px; margin: 0 13px 0 0; border-radius: 50%; background: #e3008c; color: #fff; font-size: 12px; }

/* ribbon tabs */
.tabs { flex: none; height: 40px; display: flex; align-items: center; padding: 0 19px 0 14px; font-size: 16px; }
.tabs > button { height: 34px; padding: 2px 11px 0 13px; position: relative; }
.tabs .file { margin-right: 9px; }
.tabs .on { font-weight: 600; }
.tabs .on::after { content: ""; position: absolute; left: 12px; right: 10px; bottom: 0; height: 3px; border-radius: 2px; background: #0f703b; }
.actions { margin-left: auto; display: flex; align-items: center; gap: 11px; }
.comments { width: 117px; height: 30px; gap: 4px; border: 1px solid #777; border-radius: 5px; background: #fff; }
.share { width: 89px; height: 30px; gap: 5px; border-radius: 5px; background: #107c41; color: #fff; }
.catchup { margin-left: 7px; }
.catchup svg { fill: none; stroke: #444; stroke-width: 1.4; }

/* ribbon */
.ribbon { flex: none; height: 124px; margin: 0 10px; display: flex; background: #fff; border-radius: 10px; box-shadow: 0 1px 3px rgba(0,0,0,.25); }
.group { flex: none; position: relative; display: grid; grid-template-rows: 100px 24px; }
.group::after { content: ""; position: absolute; right: 0; top: 6px; bottom: 7px; width: 1px; background: #c8c8c8; }
.g-clip { width: 216px; } .g-font { width: 292px; } .g-align { width: 373px; } .g-num { width: 200px; } .g-styles { width: 490px; } .g-cells { width: 180px; }
.g-edit { width: 267px; } .g-add { width: 77px; } .g-analyze { width: 133px; } .g-acro { width: 172px; } .g-solver { width: 72px; }
.body { display: flex; }
.body.center { justify-content: center; }
.name { display: flex; justify-content: center; align-items: center; font-size: 13px; position: relative; }
.name:has(button) { padding-right: 20px; }
.name button { position: absolute; right: 4px; top: 7px; }
.name button svg { width: 11px; height: 11px; }
.big { flex-direction: column; justify-content: flex-start; padding-top: 8px; text-align: center; }
.big > svg:first-child { width: 38px; height: 40px; flex: none; margin-bottom: 3px; overflow: visible; }
.big > .chev { margin-top: 7px; }
.big span .chev { margin: 0 0 3px 1px; }
.paste { margin: 0 12px 0 20px; width: 42px; }
.stack { padding-top: 4px; }
.stack button { height: 32px; gap: 5px; justify-content: flex-start; }
.copy .chev { margin-left: 16px; }
.rows { display: flex; flex-direction: column; padding: 14px 0 0 9px; gap: 10px; }
.row { height: 30px; display: flex; align-items: center; }
.w14 { width: 14px; } .w18 { width: 18px; } .w20 { width: 20px; } .w28 { width: 28px; } .w30 { width: 30px; } .w32 { width: 32px; } .w34 { width: 34px; } .w36 { width: 36px; }
.w54 { width: 54px; } .w56 { width: 56px; } .w60 { width: 60px; } .w82 { width: 82px; } .w86 { width: 86px; } .w102 { width: 102px; }
.combo { position: relative; height: 30px; display: flex; }
.combo select { width: 100%; height: 30px; appearance: none; border: 1px solid #808080; border-radius: 5px; padding-left: 2px; background: #fff; }
.combo .chev { position: absolute; right: 3px; top: 12px; }
.w144 { width: 144px; margin-right: 2px; } .w62 { width: 62px; margin-right: 3px; } .w180 { width: 180px; }
.grow, .shrink { align-items: flex-start; font-size: 20px; line-height: 24px; }
.shrink { font-size: 17px; line-height: 26px; }
.grow svg, .shrink svg { margin-top: 4px; }
.b { font-weight: 700; font-size: 16px; }
.i { font: italic 18px "Liberation Serif", serif; }
.u { font-size: 16px; text-decoration: underline; }
.row hr { height: 30px; background: linear-gradient(#d0d0d0, #d0d0d0) center / 1px 100% no-repeat; }
.row hr.thin { width: 4px; }
.ln path { fill: none; stroke: #444; stroke-width: 1.4; }
.ln .bl, .bl { fill: none; stroke: #2b88d8; stroke-width: 1.5; }
.sel { height: 30px; border: 1px solid #777; border-radius: 5px; background: #e8e8e8; }
.part { width: 179px; }
.wrap { padding-left: 12px; margin-bottom: 9px; background: linear-gradient(#d0d0d0, #d0d0d0) 0 13px / 1px 80px no-repeat; }
.wrap button { gap: 5px; justify-content: flex-start; }
.far { margin-left: 18px; }
.sym { font-size: 20px; color: #444; }
.dec { flex-direction: column; font-size: 12px; line-height: 12px; color: #444; align-items: flex-end; padding-right: 6px; }
.g-styles .body { padding-left: 13px; }
.gallery { width: 300px; height: 78px; margin-top: 14px; margin-left: -5px; display: flex; border: 1px solid #c8c8c8; border-radius: 5px; }
.swatches { flex: 1; display: grid; grid-template-columns: 1fr 1fr; gap: 8px; padding: 6px 5px; }
.swatches button { justify-content: flex-start; padding-left: 5px; font-size: 15px; outline-offset: 2px; }
.normal { outline: 2px solid #666; color: #000; }
.bad { background: #ffc7ce; color: #9c0006; }
.good { background: #c6efce; color: #006100; }
.neutral { background: #ffeb9c; color: #9c5700; }
.open { width: 30px; margin: -1px; border: 1px solid #555; border-radius: 0 5px 5px 0; }
.g-cells .body { padding-left: 9px; }
.g-edit .stack { width: 143px; padding-left: 15px; }
.sum { width: 116px; }
.sum .chev { margin-left: auto; }
.collapse { margin: auto 16px 8px auto; }

/* formula bar */
.formula { flex: none; height: 48px; padding: 10px 11px 8px 10px; display: flex; align-items: center; }
.namebox, .fx, .entry { height: 30px; display: flex; align-items: center; background: #fff; border: 1px solid #d0d0d0; border-radius: 5px; }
.namebox { width: 126px; padding: 0 6px; justify-content: space-between; font-size: 15px; }
.namebox input { width: 80px; }
.dots { width: 26px; display: flex; flex-direction: column; align-items: center; gap: 3px; }
.dots i { width: 3px; height: 3px; background: #444; }
.fx { width: 106px; padding: 0 2px 0 7px; justify-content: space-between; margin-right: 6px; }
.fn { font: italic 22px "Liberation Serif", serif; color: #222; }
.entry { flex: 1; padding-right: 4px; }
.entry input { flex: 1; }

/* worksheet */
.sheet { flex: 1; min-height: 0; display: grid; grid-template-columns: minmax(0, 1fr) 26px; grid-template-rows: 23px minmax(0, 1fr); }
.cols { display: grid; grid-template-columns: 34px 72px 144px 245px repeat(11, 131px) 72px 72px 72px 108px 72px 72px 72px 72px; overflow: hidden; border-bottom: 1px solid #a0a0a0; color: #444; text-align: center; line-height: 22px; }
.cols span { background: linear-gradient(transparent, #c8c8c8) right / 1px 100% no-repeat; }
.cols .all { background: linear-gradient(135deg, transparent 50%, #dcdcdc 50%) right 3px bottom 3px / 15px 15px no-repeat; border-right: 1px solid #c8c8c8; }
.grid { display: flex; background: #fff; overflow: hidden; border-bottom: 1px solid #d8d8d8; border-right: 1px solid #d8d8d8; }
.rownums { width: 34px; margin: 0; padding: 0; list-style: none; background: #efefef; border-right: 1px solid #a0a0a0; color: #444; }
.rownums li { height: 22px; line-height: 23px; padding-right: 4px; text-align: right; background: linear-gradient(90deg, transparent, #c8c8c8 50%) bottom / 100% 1px no-repeat; }
.cells { flex: 1; display: flex; align-items: flex-start; gap: 1px; padding-left: 217px; margin-top: -1px; }
.chart { flex: none; }
.frame { fill: #f2f2f2; stroke: #d5d5d5; }
.title { font: bold 18px "Open Sans", sans-serif; fill: #595959; text-anchor: middle; }
.tags rect { fill: #fff; stroke: #c8c8c8; }
.tags text { font: bold 12px "Open Sans", sans-serif; fill: #505050; }
.lined rect { stroke: #bfbfbf; }
.leads { fill: none; stroke: #a6a6a6; }
.legend text { font: 15px "Open Sans", sans-serif; fill: #595959; }
.vscroll { grid-column: 2; grid-row: 1 / 3; margin: 0 2px 0 3px; border-radius: 10px; background: #f5f5f5; display: flex; flex-direction: column; align-items: center; padding: 6px 0 3px; }
.vscroll i { width: 11px; height: 312px; margin: auto 0 9px; border-radius: 6px; background: #707070; }
.vscroll svg, .hscroll svg { fill: #666; }

/* sheet tabs */
.sheets { flex: none; height: 39px; display: flex; align-items: center; padding: 0 23px 0 16px; font-size: 16px; }
.nav { width: 40px; height: 30px; }
.nav svg { fill: none; stroke: #a0a0a0; stroke-width: 1.5; }
.tab { height: 30px; border-radius: 5px; }
.yellow { margin-left: 45px; width: 122px; background: #ffffc8; }
.sheets hr { width: 11px; height: 24px; background: linear-gradient(#c8c8c8, #c8c8c8) center / 1px 100% no-repeat; }
.active { align-self: flex-start; width: 151px; height: 35px; border: 2px solid #fff; border-top: 0; background: linear-gradient(#fff 10%, #b795cf); border-radius: 0 0 7px 7px; font-weight: 600; box-shadow: 0 0 1px #999; }
.active span { border-bottom: 3px solid #107c41; padding-top: 2px; line-height: 26px; }
.purple { width: 171px; background: #7030a0; color: #fff; }
.short { width: 37px; }
.plus { margin-left: 47px; }
.dots.right { margin-left: auto; }
.hscroll { width: 193px; height: 22px; margin-left: 8px; border-radius: 11px; background: #f5f5f5; display: flex; align-items: center; justify-content: space-between; padding: 0 5px; }
.hscroll i { width: 151px; height: 12px; border-radius: 6px; background: #707070; }

/* status bar */
.status { flex: none; height: 28px; display: flex; align-items: center; padding: 0 17px 0 14px; background: #f3f3f3; border-top: 1px solid #fff; font-size: 12px; }
.status .rec { margin: 0 22px 0 28px; }
.status .acc { gap: 4px; font-weight: 700; }
.views { margin-left: auto; align-self: stretch; display: flex; }
.views button { width: 50px; }
.views svg { fill: none; stroke: #444; stroke-width: 1.4; }
.views .on { background: #dedede; }
.views .z { width: 23px; }
.views .pct { width: 34px; justify-content: flex-end; }
.slide { width: 125px; display: flex; align-items: center; background: linear-gradient(#666, #666) 62px center / 1px 8px no-repeat; }
.slide input { appearance: none; width: 125px; height: 14px; background: linear-gradient(#666, #666) center / 100% 1px no-repeat; }
.slide input::-webkit-slider-thumb { appearance: none; width: 6px; height: 14px; background: #5c5c5c; }

/* taskbar */
.taskbar { flex: none; height: 60px; display: grid; grid-template-columns: 1fr auto 1fr; align-items: center; background: #cfe4f2; border-top: 1px solid #a3b5c2; }
.weather { margin-left: 27px; justify-self: start; gap: 3px; text-align: left; }
.weather text { font: 14px "Open Sans", sans-serif; fill: #fff; text-anchor: middle; }
.weather em { font-style: normal; color: #555; }
.apps { display: flex; align-items: center; padding-left: 14px; }
.start { width: 30px; margin-right: 18px; }
.tsearch { width: 273px; height: 39px; margin-right: 3px; padding: 0 13px; display: flex; align-items: center; gap: 12px; border-radius: 20px; border: 1px solid #bfd0de; background: #f1f7fb; font-size: 16px; }
.tsearch input { flex: 1; }
.tsearch input::placeholder { color: #5a5a5a; opacity: 1; }
.task { width: 55px; height: 59px; position: relative; }
.task svg { flex: none; }
.run::after { content: ""; position: absolute; bottom: 6px; left: 24px; width: 8px; height: 4px; border-radius: 2px; background: #77838c; }
.tray { justify-self: end; display: flex; align-items: center; gap: 23px; padding-right: 24px; }
.tray button { gap: 10px; }
.clock { text-align: right; }
```
